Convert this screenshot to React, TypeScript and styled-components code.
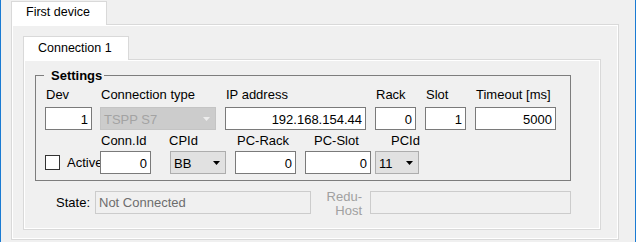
import styled, { createGlobalStyle } from "styled-components";

const GlobalStyle = createGlobalStyle`
  html, body {
    margin: 0;
    padding: 0;
    background: #f0f0f0;
  }
  body {
    font-family: "Liberation Sans", Arial, sans-serif;
    font-size: 13px;
    color: #000;
  }
  * {
    box-sizing: border-box;
  }
`;

const Window = styled.div`
  width: 636px;
  height: 242px;
  border-left: 1px solid #1a7bd3;
  border-right: 1px solid #1a7bd3;
  padding: 1px 0 0 10px;
  overflow: hidden;
`;

const TabControl = styled.div<{ $width: number }>`
  display: flex;
  flex-direction: column;
  width: ${(p) => p.$width}px;
`;

const TabStrip = styled.div`
  display: flex;
`;

const Tab = styled.div<{ $width: number; $line: number }>`
  position: relative;
  z-index: 1;
  width: ${(p) => p.$width}px;
  height: 24px;
  margin-bottom: -1px;
  padding-left: 14px;
  background: #ffffff;
  border: 1px solid #d9d9d9;
  border-bottom: none;
  font-size: 12.5px;
  line-height: ${(p) => p.$line}px;
  white-space: nowrap;
`;

const TabPanel = styled.div<{ $height: number; $pad: string }>`
  height: ${(p) => p.$height}px;
  padding: ${(p) => p.$pad};
  background: #f0f0f0;
  border: 1px solid #d9d9d9;
  box-shadow: inset 0 0 0 1px #ffffff;
`;

const GroupBox = styled.fieldset`
  width: 536px;
  min-width: 0;
  margin: 0;
  padding: 4px 0 6px 9px;
  border: 1px solid #7d7d7d;
`;

const Legend = styled.legend`
  margin-left: -1px;
  padding: 0 2px 0 7px;
  font-weight: bold;
  font-size: 13px;
  line-height: 15px;
`;

const FieldRow = styled.div<{ $top?: number }>`
  display: flex;
  align-items: flex-end;
  margin-top: ${(p) => p.$top ?? 0}px;
`;

const Field = styled.div<{ $width: number; $gap?: number }>`
  display: flex;
  flex-direction: column;
  flex: none;
  width: ${(p) => p.$width}px;
  margin-left: ${(p) => p.$gap ?? 0}px;
`;

const FieldLabel = styled.div<{ $indent?: number; $space: number }>`
  height: 15px;
  line-height: 15px;
  margin-left: ${(p) => p.$indent ?? 1}px;
  margin-bottom: ${(p) => p.$space}px;
  white-space: nowrap;
`;

const TextBox = styled.input`
  width: 100%;
  height: 23px;
  margin: 0;
  padding: 1px 3px 0 3px;
  border: 1px solid #7a7a7a;
  background: #ffffff;
  color: #000;
  font-family: "Liberation Sans", Arial, sans-serif;
  font-size: 13px;
  text-align: right;
  outline: none;
`;

const Combo = styled.div<{ $disabled?: boolean }>`
  display: flex;
  align-items: center;
  justify-content: space-between;
  height: 23px;
  padding: 1px 5px 0 3px;
  background: ${(p) => (p.$disabled ? "#cccccc" : "#e1e1e1")};
  border: 1px solid ${(p) => (p.$disabled ? "#c4c4c4" : "#adadad")};
  color: ${(p) => (p.$disabled ? "#a3a3a3" : "#000")};
  line-height: 15px;
`;

/* the Conn.Id box that follows paints over the tail of "Active", as in the form */
const CheckCell = styled.div`
  display: flex;
  align-items: center;
  flex: none;
  width: 55px;
  height: 23px;
  white-space: nowrap;
`;

const CheckBox = styled.span`
  flex: none;
  width: 15px;
  height: 15px;
  margin-right: 7px;
  border: 1px solid #333333;
  background: #ffffff;
`;

const StateRow = styled.div`
  display: flex;
  align-items: flex-start;
  height: 23px;
  margin-top: 10px;
`;

const StateLabel = styled.div<{ $width: number; $muted?: boolean }>`
  flex: none;
  width: ${(p) => p.$width}px;
  text-align: right;
  color: ${(p) => (p.$muted ? "#a0a0a0" : "#000")};
  line-height: ${(p) => (p.$muted ? "14px" : "23px")};
  margin-top: ${(p) => (p.$muted ? -1 : 0)}px;
`;

const StateBox = styled.div<{ $width: number; $gap: number }>`
  flex: none;
  width: ${(p) => p.$width}px;
  height: 23px;
  margin-left: ${(p) => p.$gap}px;
  padding: 1px 0 0 3px;
  border: 1px solid #cccccc;
  background: #f0f0f0;
  color: #6d6d6d;
  line-height: 20px;
  white-space: nowrap;
`;

const Arrow = ({ color }: { color: string }) => (
  <svg width="7" height="4" viewBox="0 0 7 4">
    <polygon points="0,0 7,0 3.5,4" fill={color} />
  </svg>
);

const topFields = [
  { label: "Dev", value: "1", width: 47, gap: 0 },
  { label: "IP address", value: "192.168.154.44", width: 141, gap: 9 },
  { label: "Rack", value: "0", width: 41, gap: 9 },
  { label: "Slot", value: "1", width: 41, gap: 9 },
  { label: "Timeout [ms]", value: "5000", width: 81, gap: 9 },
];

export default function App() {
  const [dev, ...rest] = topFields;

  return (
    <>
      <GlobalStyle />
      <Window>
        <TabControl $width={608}>
          <TabStrip>
            <Tab $width={96} $line={21}>First device</Tab>
          </TabStrip>
          <TabPanel $height={216} $pad="11px 0 0 11px">
            <TabControl $width={578}>
              <TabStrip>
                <Tab $width={106} $line={23}>Connection 1</Tab>
              </TabStrip>
              <TabPanel $height={171} $pad="8px 0 0 11px">
                <GroupBox>
                  <Legend>Settings</Legend>
                  <FieldRow>
                    <Field $width={dev.width}>
                      <FieldLabel $space={5}>{dev.label}</FieldLabel>
                      <TextBox readOnly value={dev.value} />
                    </Field>
                    <Field $width={116} $gap={8}>
                      <FieldLabel $space={5}>Connection type</FieldLabel>
                      <Combo $disabled>
                        <span>TSPP S7</span>
                        <Arrow color="#ededed" />
                      </Combo>
                    </Field>
                    {rest.map((f) => (
                      <Field key={f.label} $width={f.width} $gap={f.gap}>
                        <FieldLabel $space={5}>{f.label}</FieldLabel>
                        <TextBox readOnly value={f.value} />
                      </Field>
                    ))}
                  </FieldRow>
                  <FieldRow $top={3}>
                    <CheckCell>
                      <CheckBox />
                      Active
                    </CheckCell>
                    <Field $width={51}>
                      <FieldLabel $space={3}>Conn.Id</FieldLabel>
                      <TextBox readOnly value="0" />
                    </Field>
                    <Field $width={56} $gap={19}>
                      <FieldLabel $space={3} $indent={-1}>CPId</FieldLabel>
                      <Combo>
                        <span>BB</span>
                        <Arrow color="#000" />
                      </Combo>
                    </Field>
                    <Field $width={61} $gap={9}>
                      <FieldLabel $space={3} $indent={2}>PC-Rack</FieldLabel>
                      <TextBox readOnly value="0" />
                    </Field>
                    <Field $width={66} $gap={9}>
                      <FieldLabel $space={3} $indent={9}>PC-Slot</FieldLabel>
                      <TextBox readOnly value="0" />
                    </Field>
                    <Field $width={44} $gap={4}>
                      <FieldLabel $space={3} $indent={16}>PCId</FieldLabel>
                      <Combo>
                        <span>11</span>
                        <Arrow color="#000" />
                      </Combo>
                    </Field>
                  </FieldRow>
                </GroupBox>
                <StateRow>
                  <StateLabel $width={55}>State:</StateLabel>
                  <StateBox $width={216} $gap={5}>Not Connected</StateBox>
                  <StateLabel $width={51} $muted>
                    Redu-
                    <br />
                    Host
                  </StateLabel>
                  <StateBox $width={201} $gap={8} />
                </StateRow>
              </TabPanel>
            </TabControl>
          </TabPanel>
        </TabControl>
      </Window>
    </>
  );
}
